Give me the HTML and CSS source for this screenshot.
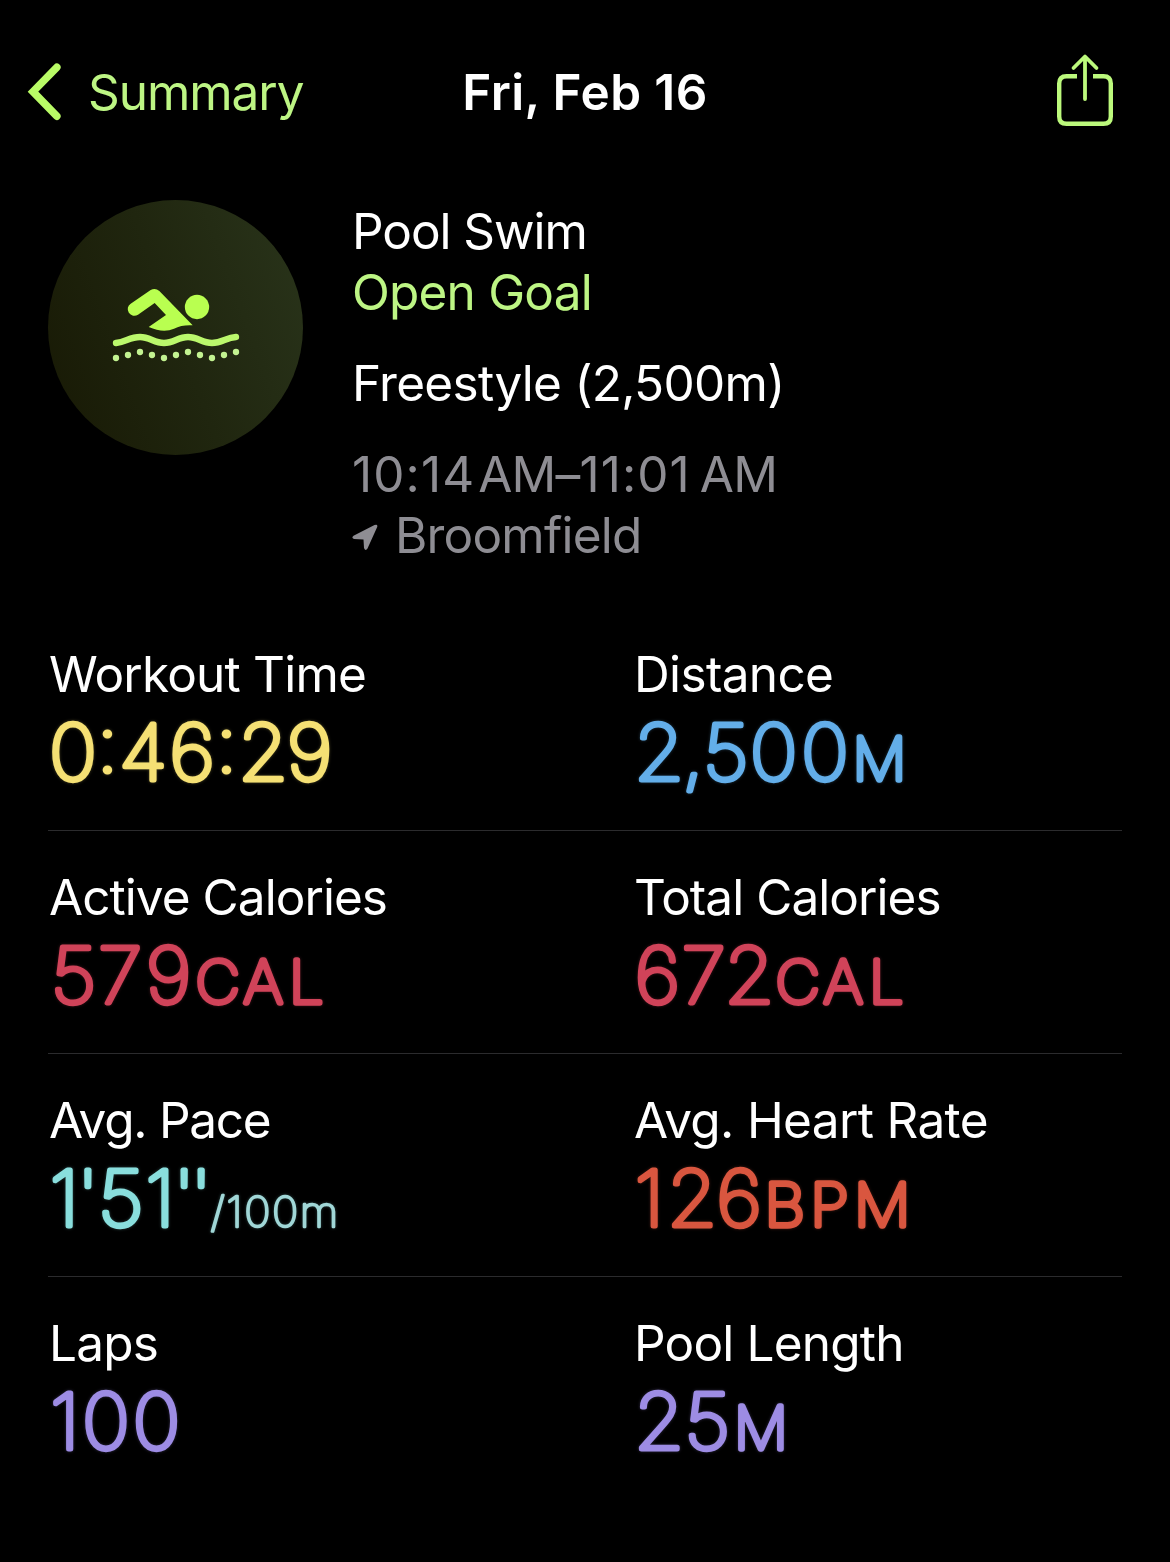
FILE: index.html
```html
<!DOCTYPE html>
<html lang="en">
<head>
<meta charset="utf-8">
<title>Pool Swim</title>
<link rel="stylesheet" href="styles.css">
</head>
<body>
<header class="nav">
  <a class="back">
    <svg width="36" height="60" viewBox="0 0 36 60" fill="none" stroke="currentColor" stroke-width="7.6" stroke-linecap="round" stroke-linejoin="miter"><path d="M31.8 5.300 L8 29.700 L31.8 54.200"/></svg>
    <span class="back-label">Summary</span>
  </a>
  <h1 class="title">Fri, Feb 16</h1>
  <svg class="share" width="60" height="76" viewBox="0 0 60 76" fill="none" stroke="currentColor" stroke-width="4.4">
    <path d="M22 24.200H11.500Q4.200 24.200 4.200 31.500V64.500Q4.200 71.800 11.500 71.800H48.500Q55.800 71.800 55.800 64.500V31.500Q55.800 24.200 48.500 24.200H38"/>
    <path d="M30 47V5M18.500 16L30 4.500L41.500 16" stroke-width="3.800" stroke-linecap="round" stroke-linejoin="round"/>
  </svg>
</header>

<section class="workout">
  <div class="badge">
    <svg width="150" height="100" viewBox="0 0 450 300">
      <path class="bright" d="M92 86L152 45Q166 37 178 48L278 151Q246 149 222 161Q190 175 146 156L198 120L164 84L114 119A19 19 0 0 1 92 86Z"/>
      <circle class="bright" cx="291" cy="96" r="36.500"/>
      <path class="wave" d="M48 204C78 200 90 186 120 186S162 204 192 204S234 186 264 186S306 204 336 204S378 188 408 186"/>
      <g class="dots">
        <circle cx="48" cy="249" r="9.500"/><circle cx="84" cy="240" r="9.500"/><circle cx="120" cy="231" r="9.500"/><circle cx="156" cy="240" r="9.500"/><circle cx="192" cy="249" r="9.500"/><circle cx="228" cy="240" r="9.500"/><circle cx="264" cy="231" r="9.500"/><circle cx="300" cy="240" r="9.500"/><circle cx="336" cy="249" r="9.500"/><circle cx="372" cy="240" r="9.500"/><circle cx="408" cy="231" r="9.500"/>
      </g>
    </svg>
  </div>
  <div class="info">
    <div class="name">Pool Swim</div>
    <div class="goal">Open Goal</div>
    <div class="stroke">Freestyle (2,500m)</div>
    <div class="time"><span class="clock">10:14</span><span>AM–<span class="clock">11:01</span></span><span class="end">AM</span></div>
    <div class="place">
      <svg width="26" height="28" viewBox="0 0 26 28" fill="currentColor"><path d="M1.500 12.800L22.500 2Q26 .8 25.200 4L15.500 25.500Q13.500 28.500 12 25L11.500 16.500L2 16Q-1 15 1.500 12.800Z"/></svg>
      <span>Broomfield</span>
    </div>
  </div>
</section>

<main class="stats">
  <div class="row">
    <div class="stat"><div class="label">Workout Time</div><svg class="value yellow"><text class="num" y="76.300" dx="1 -.5 .5 2 .5 .5 -1.500">0:46:29</text></svg></div>
    <div class="stat"><div class="label distance">Distance</div><svg class="value blue"><text class="num" y="76.300" dx="1 -2 0 1 3">2,500</text><text class="unit" transform="translate(219.500 75.500) scale(1.030 1)">M</text></svg></div>
  </div>
  <div class="row">
    <div class="stat"><div class="label calories">Active Calories</div><svg class="value red"><text class="num" y="76.300" dx="2.500 1.500 4">579</text><text class="unit" transform="translate(147.500 75.500) scale(1.050 1)" dx="0 4 6">CAL</text></svg></div>
    <div class="stat"><div class="label calories">Total Calories</div><svg class="value red"><text class="num" y="76.300" dx="1.500 1 -1.500">672</text><text class="unit" transform="translate(142.500 75.500) scale(1.050 1)" dx="0 4 6">CAL</text></svg></div>
  </div>
  <div class="row">
    <div class="stat"><div class="label pace">Avg. Pace</div><svg class="value teal"><text class="num" y="76.300" dx="1.500 -2.500 -1 1.500 -2 -5">1'51''</text><text class="per" transform="translate(162.500 76.500) scale(1.060 1)">/100m</text></svg></div>
    <div class="stat"><div class="label heart">Avg. Heart Rate</div><svg class="value orange"><text class="num" y="76.300" dx="1.500 2.500 -1">126</text><text class="unit" transform="translate(131.500 75.500) scale(1.080 1)" dx="0 5 5">BPM</text></svg></div>
  </div>
  <div class="row">
    <div class="stat"><div class="label">Laps</div><svg class="value purple"><text class="num" y="76.300" dx="2 2 2.500">100</text></svg></div>
    <div class="stat"><div class="label">Pool Length</div><svg class="value purple"><text class="num" y="76.300" dx="1 0">25</text><text class="unit" transform="translate(101 75.500) scale(1.030 1)">M</text></svg></div>
  </div>
</main>
</body>
</html>
```

FILE: styles.css
```css
* { box-sizing: border-box; }
body {
  margin: 0;
  min-height: 1562px;
  background: #000;
  color: #fff;
  font-family: Inter, "Liberation Sans", sans-serif;
  font-size: 49.500px;
  line-height: 60px;
  white-space: nowrap;
}
.nav {
  display: grid;
  grid-template-columns: 1fr auto 1fr;
  align-items: center;
  height: 184px;
  padding: 0 55px;
  color: #bcf97c;
}
.back { display: flex; align-items: center; gap: 27px; margin-left: -30px; color: #b9fb66; }
.back-label { color: #bdf584; letter-spacing: -1.050px; }
.title { margin: 0; color: #fff; font-size: 49.500px; font-weight: 600; letter-spacing: 0.400px; }
.share { justify-self: end; margin-bottom: 5px; }

.workout { display: flex; gap: 49px; padding: 16px 48px 0; height: 424px; }
.badge {
  display: flex;
  width: 255px;
  height: 255px;
  border-radius: 50%;
  padding: 75px 0 0 52px;
  background: linear-gradient(70deg, #191b06 8%, #20260f 50%, #283219 92%);
}
.bright { fill: #b9ff50; }
.wave { fill: none; stroke: #bbf86c; stroke-width: 19; stroke-linecap: round; }
.dots { fill: #c3f391; }
.info { line-height: 61px; padding-top: 1px; letter-spacing: -0.800px; }
.name { letter-spacing: -1.050px; }
.goal { color: #bdf584; }
.stroke { margin: 30px 0; letter-spacing: -0.700px; }
.time, .place { color: #8e8d93; }
.time { display: flex; gap: 3px; }
.end { margin-left: 6px; }
.clock { letter-spacing: 1.100px; }
.place { display: flex; align-items: center; gap: 17px; }
.place svg { margin-top: 3px; }

.stats { padding: 0 48px; }
.row {
  display: grid;
  grid-template-columns: 585px 1fr;
  height: 223px;
  padding-top: 36px;
  border-bottom: 1px solid #2b2b2d;
}
.row:last-child { border-bottom: 0; }
.label { padding-left: 1px; letter-spacing: -0.800px; }
.distance, .heart { letter-spacing: -0.650px; }
.calories { letter-spacing: -0.950px; }
.pace { letter-spacing: -1.250px; }
.value {
  display: block;
  width: 100%;
  height: 96px;
  overflow: visible;
  font-size: 76.500px;
  font-weight: 100;
  fill: currentColor;
  stroke: currentColor;
  stroke-width: 5px;
  stroke-linejoin: round;
  filter: drop-shadow(0 0 1.500px color-mix(in srgb, currentColor 30%, transparent));
}
.num { transform: scaleX(1.060); }
.unit { font-size: 58.500px; stroke-width: 5.300px; }
.per { font-size: 42px; letter-spacing: 1.400px; stroke-width: 2.500px; fill: #a0d7d7; stroke: #a0d7d7; }
.yellow { color: #f5e074; }
.blue { color: #63aee9; }
.red { color: #d04359; }
.teal { color: #89dedd; }
.orange { color: #d9563f; }
.purple { color: #9d8ce4; }
```
